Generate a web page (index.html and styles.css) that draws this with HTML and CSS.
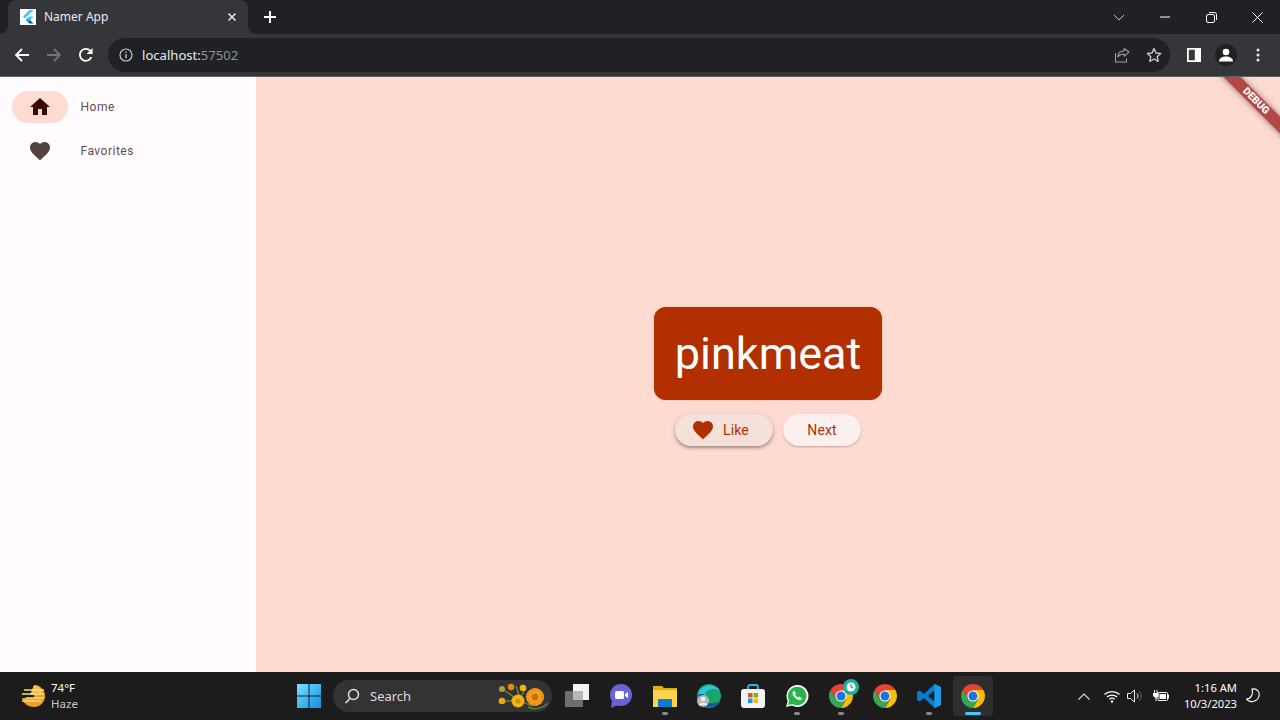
FILE: index.html
```html
<!DOCTYPE html>
<html lang="en">
<head>
<meta charset="utf-8">
<title>Namer App</title>
<link rel="stylesheet" href="styles.css">
</head>
<body>
<svg class="defs" width="0" height="0" aria-hidden="true">
  <symbol id="chrome" viewBox="0 0 24 24">
    <path fill="#ea4335" d="M12 12 6.800 15 1.610 6A12 12 0 0 1 22.390 6H12Z"/>
    <path fill="#fbbc04" transform="rotate(120 12 12)" d="M12 12 6.800 15 1.610 6A12 12 0 0 1 22.390 6H12Z"/>
    <path fill="#34a853" transform="rotate(240 12 12)" d="M12 12 6.800 15 1.610 6A12 12 0 0 1 22.390 6H12Z"/>
    <circle cx="12" cy="12" r="5.600" fill="#fff"/>
    <circle cx="12" cy="12" r="4.500" fill="#1a73e8"/>
  </symbol>
  <symbol id="heart" viewBox="0 0 24 24">
    <path d="M12 21.350l-1.450-1.320C5.400 15.360 2 12.280 2 8.500 2 5.420 4.420 3 7.500 3c1.740 0 3.410.81 4.500 2.090C13.090 3.810 14.760 3 16.500 3 19.580 3 22 5.420 22 8.500c0 3.780-3.400 6.860-8.550 11.540L12 21.350z"/>
  </symbol>
</svg>

<header class="browser">
  <div class="tabstrip">
    <div class="tab">
      <span class="favicon">
        <svg width="16" height="16" viewBox="0 0 16 16"><path fill="#47c5fb" d="M9.500 1 3 7.600l2 2L13.500 1z"/><path fill="#47c5fb" d="M9.400 7.400 5.900 10.900l2 2 5.600-5.500z"/><path fill="#00569e" d="M7.900 12.900l1.500 1.600h4.100l-3.600-3.600z"/><path fill="#00b5f8" d="M5.900 10.900l2-2 2 2-2 2z"/></svg>
      </span>
      <span class="tab-title">Namer App</span>
      <svg class="tab-close" width="10" height="10" viewBox="0 0 10 10"><path d="M1.500 1.500l7 7M8.500 1.500l-7 7" stroke="#e8eaed" stroke-width="1.500"/></svg>
    </div>
    <svg class="new-tab" width="12" height="12" viewBox="0 0 12 12"><path d="M6 0v12M0 6h12" stroke="#fff" stroke-width="2"/></svg>
    <div class="win-controls">
      <span class="win-btn"><svg width="12" height="7" viewBox="0 0 12 7"><path d="M1 1l5 5 5-5" fill="none" stroke="#c4c7c5" stroke-width="1"/></svg></span>
      <span class="win-btn"><svg width="10" height="2" viewBox="0 0 10 2"><path d="M0 1h10" stroke="#fff" stroke-width="1"/></svg></span>
      <span class="win-btn"><svg width="11" height="11" viewBox="0 0 11 11"><rect x=".5" y="2.500" width="8" height="8" rx="1.500" fill="none" stroke="#fff"/><path d="M3 .5h5.500a2 2 0 0 1 2 2V8" fill="none" stroke="#fff"/></svg></span>
      <span class="win-btn"><svg width="11" height="11" viewBox="0 0 11 11"><path d="M.5.500l10 10M10.500.500l-10 10" stroke="#fff" stroke-width="1"/></svg></span>
    </div>
  </div>
  <div class="toolbar">
    <span class="tool"><svg width="16" height="16" viewBox="0 0 16 16"><path d="M15 8H2M8 2 2 8l6 6" fill="none" stroke="#fff" stroke-width="1.800"/></svg></span>
    <span class="tool"><svg width="16" height="16" viewBox="0 0 16 16"><path d="M1 8h13M8 2l6 6-6 6" fill="none" stroke="#74767a" stroke-width="1.800"/></svg></span>
    <span class="tool"><svg width="16" height="16" viewBox="0 0 16 16"><path d="M13.400 10.200A6 6 0 1 1 12.200 3.600" fill="none" stroke="#fff" stroke-width="1.800"/><path d="M14.600 1v6h-6z" fill="#fff"/></svg></span>
    <div class="omnibox">
      <svg class="info" width="14" height="14" viewBox="0 0 14 14"><circle cx="7" cy="7" r="6" fill="none" stroke="#c4c7ca" stroke-width="1.200"/><path d="M7 6v4.200M7 3.500v1.300" stroke="#c4c7ca" stroke-width="1.400"/></svg>
      <span class="url"><span class="host">localhost:</span><span class="port">57502</span></span>
      <span class="omni-actions">
        <span class="tool"><svg width="16" height="16" viewBox="0 0 16 16"><path d="M15 5.200 10.200 1.500v2.300C6.500 4 4.100 6.200 3.700 9.800 5.500 7.800 7.500 7 10.200 7v2.300z" fill="none" stroke="#9aa0a6" stroke-width="1.100" stroke-linejoin="round"/><path d="M1.500 6v9h11v-3.500" fill="none" stroke="#9aa0a6" stroke-width="1.100"/></svg></span>
        <span class="tool"><svg width="16" height="16" viewBox="0 0 16 16"><path d="M8 1.600l2 4.400 4.700.5-3.500 3.200 1 4.700L8 12l-4.200 2.400 1-4.700L1.300 6.500 6 6z" fill="none" stroke="#c4c7ca" stroke-width="1.400" stroke-linejoin="round"/></svg></span>
      </span>
    </div>
    <span class="tool tool-first"><svg width="14" height="14" viewBox="0 0 14 14"><path fill-rule="evenodd" fill="#fff" d="M0 0h14v14H0zM1.800 1.800v10.400h6V1.800z"/></svg></span>
    <span class="tool"><span class="avatar"><svg width="14" height="14" viewBox="0 0 14 14"><circle cx="7" cy="4" r="3.300" fill="#fff"/><path d="M0 13.500c0-3.500 3.200-5 7-5s7 1.500 7 5z" fill="#fff"/></svg></span></span>
    <span class="tool"><svg width="4" height="14" viewBox="0 0 4 14"><circle cx="2" cy="2" r="1.500" fill="#e8eaed"/><circle cx="2" cy="7" r="1.500" fill="#e8eaed"/><circle cx="2" cy="12" r="1.500" fill="#e8eaed"/></svg></span>
  </div>
</header>

<main class="app">
  <nav class="rail">
    <div class="dest">
      <span class="dest-icon is-active"><svg class="home" width="24" height="24" viewBox="0 0 24 24"><path d="M10 20v-6h4v6h5v-8h3L12 3 2 12h3v8z"/></svg></span>
      <span class="dest-label">Home</span>
    </div>
    <div class="dest">
      <span class="dest-icon"><svg class="fav" width="24" height="24"><use href="#heart"/></svg></span>
      <span class="dest-label">Favorites</span>
    </div>
  </nav>
  <section class="stage">
    <div class="word-card"><span class="word">pinkmeat</span></div>
    <div class="actions">
      <button class="pill pill-like"><svg class="pill-heart" width="24" height="24"><use href="#heart"/></svg>Like</button>
      <button class="pill pill-next">Next</button>
    </div>
    <div class="debug-ribbon">DEBUG</div>
  </section>
</main>

<footer class="taskbar">
  <div class="weather">
    <svg width="26" height="24" viewBox="0 0 26 24"><path d="M14 1A11 11 0 0 1 14 23C8 23 3 19 2 14H14z" fill="#f2a01e"/><path d="M14 1a11 11 0 0 1 9 10H10z" fill="#f6c445"/><path d="M4 6h6M8 6h16M2 10h22M6 14h18M2 17h19" stroke="#f7d98a" stroke-width="1.500"/></svg>
    <div class="weather-text"><span class="temp">74°F</span><span class="haze">Haze</span></div>
  </div>
  <span class="tb-btn"><svg width="24" height="24" viewBox="0 0 24 24"><defs><linearGradient id="win" x1="0" y1="0" x2="1" y2="1"><stop offset="0" stop-color="#7ce0fd"/><stop offset="1" stop-color="#0a8fe8"/></linearGradient></defs><path fill="url(#win)" d="M0 0h11.500v11.500H0zM12.500 0H24v11.500H12.500zM0 12.500h11.500V24H0zM12.500 12.500H24V24H12.500z"/></svg></span>
  <div class="search">
    <svg width="16" height="16" viewBox="0 0 16 16"><circle cx="9.500" cy="6.500" r="5" fill="none" stroke="#ddd" stroke-width="1.500"/><path d="M6 10.500 1.500 15" stroke="#ddd" stroke-width="1.700"/></svg>
    <span class="search-text">Search</span>
    <svg class="flowers" width="54" height="28" viewBox="0 0 54 28"><path d="M6 8l14 10 14 6M18 4l4 12M28 6l-6 10M4 20l14-2" stroke="#6b8b2e" stroke-width="1.300" fill="none"/><path d="M30 25c6 3 14 2 20-4" stroke="#5c8a2a" stroke-width="1.500" fill="none"/><circle cx="4" cy="7" r="3" fill="#a3a33a"/><circle cx="13" cy="5" r="3.300" fill="#e58a1a"/><circle cx="25" cy="6" r="3.300" fill="#f0b418"/><circle cx="4" cy="19" r="3.300" fill="#f0a818"/><circle cx="20" cy="19" r="6.500" fill="#f2b616"/><circle cx="20" cy="19" r="6" fill="none" stroke="#c98a10" stroke-width="1" stroke-dasharray="1 2"/><circle cx="20" cy="19" r="2.500" fill="#d08a14"/><circle cx="37" cy="15" r="9" fill="#f6a81c"/><circle cx="37" cy="15" r="7" fill="none" stroke="#e8780f" stroke-width="3" stroke-dasharray="1 1.500"/><circle cx="37" cy="15" r="3.500" fill="#c8720f"/></svg>
  </div>
  <div class="tb-apps">
    <span class="tb-btn"><svg width="24" height="24" viewBox="0 0 24 24"><rect x="8" y="0" width="16" height="16" fill="#f4f4f4"/><rect x="0" y="7" width="18" height="16" fill="#6e6e6e"/><rect x="8" y="7" width="10" height="9" fill="#b8b8b8"/></svg></span>
    <span class="tb-btn"><svg width="24" height="24" viewBox="0 0 24 24"><circle cx="12" cy="11" r="11" fill="#6a63d6"/><path d="M3 17 2 24l7-3z" fill="#6a63d6"/><rect x="6" y="7" width="9" height="8" rx="1.500" fill="#fff"/><path d="M16 10l3-2v6l-3-2z" fill="#fff"/></svg></span>
    <span class="tb-btn has-dot"><svg width="24" height="24" viewBox="0 0 24 24"><path d="M0 2h9l2 2h13v19H0z" fill="#e8a80c"/><path d="M0 6h24v17H0z" fill="#fcd34d"/><rect x="5" y="15" width="14" height="8" rx="1" fill="#0a7cd0"/></svg></span>
    <span class="tb-btn"><svg width="24" height="24" viewBox="0 0 24 24"><circle cx="12" cy="12" r="12" fill="#1aa56c"/><path d="M2 8C5 0 18-1 23 7c-4-3-13-3-15 3-1 4 2 7 5 7-6 2-13-2-11-9z" fill="#2fc6e0"/><path d="M1 12c0 7 6 12 13 11 4-.5 7-3 8-6-3 3-9 3-12 1-3-2-4-5-3-8-3 0-6 0-6 2z" fill="#0c59a4"/><circle cx="6" cy="17" r="6" fill="#b9b9b9"/><circle cx="6" cy="15" r="2.200" fill="#eee"/><path d="M2 21c0-3 8-3 8 0z" fill="#eee"/></svg></span>
    <span class="tb-btn"><svg width="24" height="24" viewBox="0 0 24 24"><path d="M7 6V3a2 2 0 0 1 2-2h6a2 2 0 0 1 2 2v3" fill="none" stroke="#29b6f6" stroke-width="1.800"/><rect x="0" y="5" width="24" height="19" rx="3" fill="#f4f4f4"/><rect x="7" y="9" width="4.500" height="4.500" fill="#e8501e"/><rect x="12.500" y="9" width="4.500" height="4.500" fill="#7fba00"/><rect x="7" y="14.500" width="4.500" height="4.500" fill="#0a9be8"/><rect x="12.500" y="14.500" width="4.500" height="4.500" fill="#fdb900"/></svg></span>
    <span class="tb-btn has-dot"><svg width="24" height="24" viewBox="0 0 24 24"><path d="M1 23l1.700-6A11 11 0 1 1 7 21.500z" fill="#fff"/><path d="M3 21l1.200-4.300A9.300 9.300 0 1 1 7.500 20z" fill="#29b44b"/><path d="M9 6.500 7.700 8c-.8 1.500.6 4 2.300 5.800 2 2 4.300 3 5.700 2.300l1.500-1.500-2.700-2-1.200 1c-1.500-.6-2.700-1.900-3.300-3.400l1-1.200z" fill="#fff"/></svg></span>
    <span class="tb-btn has-dot"><svg width="24" height="24"><use href="#chrome"/></svg><svg class="badge" width="16" height="16" viewBox="0 0 16 16"><circle cx="8" cy="8" r="8" fill="#13b59d"/><circle cx="8" cy="8" r="4.500" fill="#fff"/><path d="M8 5v3l2 1" stroke="#555" fill="none"/></svg></span>
    <span class="tb-btn"><svg width="24" height="24"><use href="#chrome"/></svg></span>
    <span class="tb-btn has-dot"><svg width="24" height="24" viewBox="0 0 24 24"><path d="M17.500 0 24 3v18l-6.500 3L7 14l-4.500 3.500L0 16v-8l2.500-1.500L7 10zM17.500 6.500 11 12l6.500 5.500z" fill="#0a7ccf"/><path d="M17.500 0 24 3v18l-6.500 3z" fill="#1e9be8"/></svg></span>
    <span class="tb-btn is-current"><span class="tile"><svg width="24" height="24"><use href="#chrome"/></svg></span></span>
  </div>
  <div class="tray">
    <svg class="tray-chev" width="12" height="7" viewBox="0 0 12 7"><path d="M.5 6.500 6 1l5.500 5.500" fill="none" stroke="#ddd" stroke-width="1.100"/></svg>
    <svg class="tray-wifi" width="16" height="13" viewBox="0 0 16 13"><path d="M.5 4.500a11 11 0 0 1 15 0M3 7a7.500 7.500 0 0 1 10 0M5.300 9.300a4 4 0 0 1 5.400 0" fill="none" stroke="#fff" stroke-width="1.200"/><circle cx="8" cy="11.500" r="1.200" fill="#fff"/></svg>
    <svg class="tray-vol" width="16" height="14" viewBox="0 0 16 14"><path d="M.5 4.500h3l4-3.500v12l-4-3.500h-3z" fill="none" stroke="#eee"/><path d="M10 4.500a3.500 3.500 0 0 1 0 5" fill="none" stroke="#ddd"/><path d="M12.500 2.500a6.500 6.500 0 0 1 0 9" fill="none" stroke="#666"/></svg>
    <svg class="tray-batt" width="16" height="12" viewBox="0 0 16 12"><path d="M1.500 0v3M4 0v3" stroke="#fff"/><path d="M0 3h5.500v3l-2 2v3h-1V8L0 6z" fill="#fff"/><rect x="5" y="2.500" width="9.500" height="8" rx="1" fill="none" stroke="#fff"/><rect x="6.500" y="4" width="6.500" height="5" fill="#fff"/><rect x="14.500" y="4.500" width="1.500" height="4" fill="#fff"/></svg>
    <div class="clock"><span>1:16 AM</span><span>10/3/2023</span></div>
    <svg class="tray-moon" width="14" height="16" viewBox="0 0 14 16"><path d="M6 1c5-1 8 3 7 7-1 5-7 7-11 4.500L.5 11C5 11 7.500 6 6 1z" fill="none" stroke="#fff" stroke-width="1.100"/></svg>
  </div>
</footer>
</body>
</html>
```
FILE: styles.css
```css
* { box-sizing: border-box; }
html, body { margin: 0; height: 100%; }
body {
  width: 1280px;
  height: 720px;
  overflow: hidden;
  display: flex;
  flex-direction: column;
  font-family: "Roboto", "Liberation Sans", sans-serif;
  background: #202124;
}
.defs { position: absolute; }

/* browser chrome */
.browser { height: 77px; flex: none; font-family: "Noto Sans", "Open Sans", sans-serif; }
.tabstrip { height: 34px; display: flex; align-items: center; background: #202124; padding-left: 8px; }
.tab {
  position: relative;
  width: 240px;
  height: 34px;
  display: flex;
  align-items: center;
  background: #35363a;
  border-radius: 8px 8px 0 0;
  padding-left: 12px;
}
.tab::before, .tab::after {
  content: "";
  position: absolute;
  bottom: 0;
  width: 8px;
  height: 8px;
}
.tab::before { left: -8px; background: radial-gradient(circle at 0 0, transparent 7.5px, #35363a 8px); }
.tab::after { right: -8px; background: radial-gradient(circle at 100% 0, transparent 7.5px, #35363a 8px); }
.favicon { width: 16px; height: 16px; background: #fff; display: flex; }
.tab-title { margin: -1px 0 0 8px; font-size: 12px; line-height: 16px; color: #e8eaed; flex: 1; white-space: nowrap; }
.tab-close { margin-right: 11px; }
.new-tab { margin-left: 16px; }
.win-controls { margin-left: auto; display: flex; height: 34px; }
.win-btn { width: 46px; display: flex; align-items: center; justify-content: center; }

.toolbar {
  height: 43px;
  display: flex;
  align-items: center;
  background: #35363a;
  border-bottom: 1px solid #5f6063;
  padding: 0 6px 1px 6px;
}
.tool { width: 32px; height: 32px; flex: none; display: flex; align-items: center; justify-content: center; }
.tool-first { margin-left: 8px; }
.omnibox {
  flex: 1;
  height: 34px;
  margin-left: 6px;
  display: flex;
  align-items: center;
  background: #202124;
  border-radius: 17px;
  padding-left: 11px;
}
.url { margin-left: 9px; font-size: 13.1px; white-space: nowrap; }
.host { color: #e8eaed; }
.port { color: #8f9295; }
.omni-actions { margin-left: auto; display: flex; }
.avatar {
  width: 22px; height: 22px; border-radius: 50%;
  background: #202124;
  display: flex; align-items: center; justify-content: center;
}

/* flutter app */
.app { flex: 1; display: flex; min-height: 0; }
.rail { width: 256px; flex: none; background: #fffbff; padding-top: 8px; }
.dest { height: 44px; display: flex; align-items: center; padding-left: 12px; }
.dest-icon { width: 56px; height: 32px; border-radius: 16px; display: flex; align-items: center; justify-content: center; }
.dest-icon.is-active { background: #ffdbd1; }
.home { fill: #3a0b00; }
.fav { fill: #53433f; }
.dest-label { margin-left: 12.5px; font-size: 12px; letter-spacing: .5px; color: #5f504c; }

.stage {
  position: relative;
  flex: 1;
  overflow: hidden;
  background: #ffdad0;
  display: flex;
  flex-direction: column;
  align-items: center;
  justify-content: center;
  padding-top: 4px;
}
.word-card {
  width: 228px;
  height: 93px;
  background: #b23000;
  border-radius: 12px;
  box-shadow: 0 0 1px rgba(120,30,0,.6);
  display: flex;
  align-items: center;
  justify-content: center;
}
.word { color: #fff; font-size: 45px; line-height: 52px; }
.actions { margin-top: 14px; display: flex; gap: 10px; }
.pill {
  height: 32px;
  border: 0;
  border-radius: 16px;
  font: 400 14px "Roboto", sans-serif;
  letter-spacing: .1px;
  color: #b23000;
  display: flex;
  align-items: center;
}
.pill-like {
  width: 98px;
  padding: 0 0 0 16px;
  background: #f5e0da;
  box-shadow: 0 2px 3px rgba(0,0,0,.3), 0 1px 6px rgba(0,0,0,.12);
}
.pill-heart { fill: #b23000; margin-right: 8px; flex: none; }
.pill-next {
  width: 78px;
  justify-content: center;
  background: #fbf0ee;
  box-shadow: 0 1px 2px rgba(0,0,0,.25);
}
.debug-ribbon {
  position: absolute;
  top: 18px;
  right: -26px;
  width: 100px;
  height: 12px;
  transform: rotate(45deg);
  background: rgba(160,28,28,.78);
  box-shadow: 0 0 6px rgba(0,0,0,.45);
  color: #fff;
  font: 900 10.2px/12px "Roboto", sans-serif;
  text-align: center;
}

/* windows taskbar */
.taskbar {
  height: 48px;
  flex: none;
  display: flex;
  align-items: center;
  background: #1c1c1c;
  font-family: "Noto Sans", "Open Sans", sans-serif;
  color: #fff;
}
.weather { width: 287px; flex: none; display: flex; align-items: center; padding-left: 20px; }
.weather-text { margin-left: 5px; display: flex; flex-direction: column; font-size: 11.5px; line-height: 16px; }
.temp { color: #fff; }
.haze { color: #c8c8c8; }
.tb-btn { position: relative; width: 44px; height: 48px; flex: none; display: flex; align-items: center; justify-content: center; }
.search {
  width: 219px;
  height: 32px;
  margin: 0 3px 0 2px;
  flex: none;
  display: flex;
  align-items: center;
  padding-left: 11px;
  background: #333;
  border-radius: 16px;
}
.search-text { margin-left: 10px; font-size: 13px; color: #ddd; }
.flowers { margin-left: auto; }
.tb-apps { display: flex; }
.has-dot::after {
  content: "";
  position: absolute;
  left: 19px;
  bottom: 5px;
  width: 6px;
  height: 3px;
  border-radius: 2px;
  background: #8b8b8b;
}
.badge { position: absolute; left: 24px; top: 7px; }
.tile { width: 40px; height: 40px; border-radius: 4px; background: #2e2e2e; display: flex; align-items: center; justify-content: center; }
.is-current::after {
  content: "";
  position: absolute;
  left: 14px;
  bottom: 5px;
  width: 16px;
  height: 3px;
  border-radius: 2px;
  background: #4cc2ff;
}
.tray { flex: 1; display: flex; align-items: center; padding-left: 83px; }
.tray-wifi { margin-left: 14px; }
.tray-vol { margin-left: 7px; }
.tray-batt { margin-left: 10px; }
.clock {
  width: 60px;
  margin-left: 8px;
  display: flex;
  flex-direction: column;
  align-items: flex-end;
  font-size: 11.2px;
  line-height: 16px;
  color: #fff;
}
.tray-moon { margin-left: 9px; }
```
